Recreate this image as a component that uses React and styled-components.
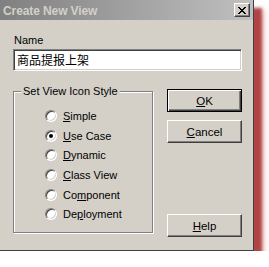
import React from "react";
import styled, { createGlobalStyle } from "styled-components";

const GlobalStyle = createGlobalStyle`
  html, body {
    margin: 0;
    padding: 0;
    background: #ffffff;
  }
  body {
    font-family: "Liberation Sans", Arial, sans-serif;
    font-size: 11px;
    color: #000;
  }
`;

const SDialog = styled.div`
  width: 254px;
  height: 251px;
  box-sizing: border-box;
  display: flex;
  flex-direction: column;
  background: #d4d0c8;
  border-right: 1px solid #404040;
  border-bottom: 1px solid #404040;
  box-shadow: 8px 8px 3px rgba(165, 45, 45, 0.85), 10px 10px 6px rgba(220, 130, 130, 0.5);
`;

const STitleBar = styled.div`
  height: 20px;
  display: flex;
  align-items: center;
  justify-content: space-between;
  padding: 0 3px 0 3px;
  background: linear-gradient(to right, #808080, #c0c0c0);
`;

const STitle = styled.span`
  color: #d4d0c8;
  font-weight: bold;
  font-size: 12px;
  letter-spacing: -0.1px;
  padding-top: 1px;
`;

const SCloseButton = styled.div`
  width: 16px;
  height: 14px;
  box-sizing: border-box;
  display: flex;
  align-items: center;
  justify-content: center;
  background: #d4d0c8;
  border: 1px solid;
  border-color: #ffffff #404040 #404040 #ffffff;
  box-shadow: inset -1px -1px 0 #808080;
`;

const SBody = styled.div`
  flex: 1;
  display: flex;
  flex-direction: column;
  padding: 13px 11px 0 13px;
`;

const SLabel = styled.div`
  height: 16px;
  line-height: 14px;
  padding-left: 1px;
`;

const SInput = styled.div`
  height: 22px;
  box-sizing: border-box;
  background: #fff;
  border: 1px solid;
  border-color: #808080 #ffffff #ffffff #808080;
  box-shadow: inset 1px 1px 0 #404040, inset -1px -1px 0 #d4d0c8;
  padding: 3px 0 0 3px;
  font-family: "Noto Sans CJK SC", "Liberation Sans", sans-serif;
  font-size: 12px;
  line-height: 14px;
`;

const SRow = styled.div`
  display: flex;
  justify-content: space-between;
  margin-top: 14px;
`;

const SGroup = styled.fieldset`
  margin: 0;
  width: 140px;
  height: 148px;
  box-sizing: border-box;
  border: 1px solid #808080;
  box-shadow: 1px 1px 0 #ffffff, inset 1px 1px 0 #ffffff;
  padding: 0;
`;

const SLegend = styled.legend`
  margin-left: 7px;
  padding: 0 2px;
  background: #d4d0c8;
  line-height: 13px;
`;

const SOptions = styled.div`
  display: flex;
  flex-direction: column;
  padding: 8px 0 0 31px;
`;

const SOption = styled.label`
  height: 19.7px;
  display: flex;
  align-items: center;
  gap: 6px;
`;

const SRadio = styled.span`
  position: relative;
  width: 12px;
  height: 12px;
  box-sizing: border-box;
  border-radius: 50%;
  background: #fff;
  border: 1px solid;
  border-color: #808080 #ffffff #ffffff #808080;
  box-shadow: inset 1px 1px 0 #404040, inset -1px -1px 0 #d4d0c8;

  &::after {
    content: "";
    display: ${(p) => (p.$checked ? "block" : "none")};
    position: absolute;
    left: 3px;
    top: 3px;
    width: 4px;
    height: 4px;
    border-radius: 50%;
    background: #000;
  }
`;

const SButtons = styled.div`
  display: flex;
  flex-direction: column;
  width: 75px;
  margin-top: 4px;
`;

const SButton = styled.div`
  height: 23px;
  box-sizing: border-box;
  display: flex;
  align-items: center;
  justify-content: center;
  background: #d4d0c8;
  border: 1px solid;
  border-color: ${(p) => (p.$default ? "#000" : "#ffffff #404040 #404040 #ffffff")};
  box-shadow: ${(p) =>
    p.$default
      ? "inset 1px 1px 0 #ffffff, inset -1px -1px 0 #404040, inset -2px -2px 0 #808080"
      : "inset -1px -1px 0 #808080"};
  margin-bottom: ${(p) => p.$gap || 0}px;
  font-size: 11.5px;
`;

const options = [
  { pre: "", key: "S", post: "imple" },
  { pre: "", key: "U", post: "se Case", checked: true },
  { pre: "", key: "D", post: "ynamic" },
  { pre: "", key: "C", post: "lass View" },
  { pre: "Co", key: "m", post: "ponent" },
  { pre: "De", key: "p", post: "loyment" },
];

const App = () => {
  return (
    <>
      <GlobalStyle />
      <SDialog>
        <STitleBar>
          <STitle>Create New View</STitle>
          <SCloseButton>
            <svg width="8" height="7" viewBox="0 0 8 7">
              <path
                d="M0 0h2v1h1v1h2V1h1V0h2v1H7v1H6v1H5v1h1v1h1v1h1v1H6V6H5V5H3v1H2v1H0V6h1V5h1V4h1V3H2V2H1V1H0z"
                fill="#000"
              />
            </svg>
          </SCloseButton>
        </STitleBar>
        <SBody>
          <SLabel>Name</SLabel>
          <SInput>商品提报上架</SInput>
          <SRow>
            <SGroup>
              <SLegend>Set View Icon Style</SLegend>
              <SOptions>
                {options.map((o) => (
                  <SOption key={o.post}>
                    <SRadio $checked={o.checked} />
                    <span>
                      {o.pre}
                      <u>{o.key}</u>
                      {o.post}
                    </span>
                  </SOption>
                ))}
              </SOptions>
            </SGroup>
            <SButtons>
              <SButton $default $gap={8}>
                <span>
                  <u>O</u>K
                </span>
              </SButton>
              <SButton $gap={71}>
                <span>
                  <u>C</u>ancel
                </span>
              </SButton>
              <SButton>
                <span>
                  <u>H</u>elp
                </span>
              </SButton>
            </SButtons>
          </SRow>
        </SBody>
      </SDialog>
    </>
  );
};

export default App;
